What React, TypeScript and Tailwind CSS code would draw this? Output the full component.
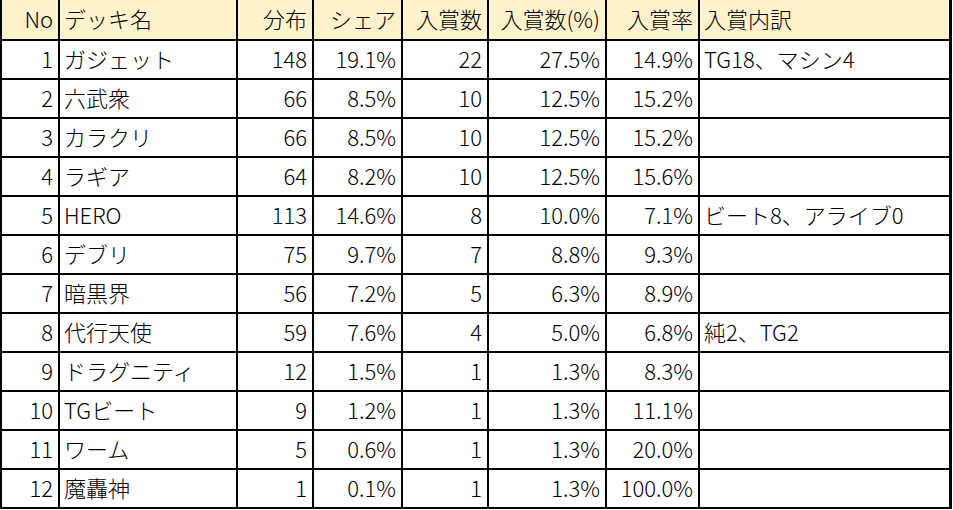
import React from "react";

type Row = [string, string, string, string, string, string, string, string];

const rows: Row[] = [
  ["1", "ガジェット", "148", "19.1%", "22", "27.5%", "14.9%", "TG18、マシン4"],
  ["2", "六武衆", "66", "8.5%", "10", "12.5%", "15.2%", ""],
  ["3", "カラクリ", "66", "8.5%", "10", "12.5%", "15.2%", ""],
  ["4", "ラギア", "64", "8.2%", "10", "12.5%", "15.6%", ""],
  ["5", "HERO", "113", "14.6%", "8", "10.0%", "7.1%", "ビート8、アライブ0"],
  ["6", "デブリ", "75", "9.7%", "7", "8.8%", "9.3%", ""],
  ["7", "暗黒界", "56", "7.2%", "5", "6.3%", "8.9%", ""],
  ["8", "代行天使", "59", "7.6%", "4", "5.0%", "6.8%", "純2、TG2"],
  ["9", "ドラグニティ", "12", "1.5%", "1", "1.3%", "8.3%", ""],
  ["10", "TGビート", "9", "1.2%", "1", "1.3%", "11.1%", ""],
  ["11", "ワーム", "5", "0.6%", "1", "1.3%", "20.0%", ""],
  ["12", "魔轟神", "1", "0.1%", "1", "1.3%", "100.0%", ""],
];

const header: Row = ["No", "デッキ名", "分布", "シェア", "入賞数", "入賞数(%)", "入賞率", "入賞内訳"];

const widths = [
  "w-[58px]",
  "w-[178px]",
  "w-[76px]",
  "w-[89px]",
  "w-[86px]",
  "w-[118px]",
  "w-[93px]",
  "w-[252px]",
];

const leftCols = new Set([1, 7]);

function Cell({ i, text }: { i: number; text: string }) {
  const align = leftCols.has(i) ? "justify-start pl-[4px]" : "justify-end pr-[5px]";
  const border = i === 7 ? "border-r-[3px]" : "border-r-2";
  return (
    <div
      className={`${widths[i]} shrink-0 ${border} border-black flex items-center pb-[3px] ${align} whitespace-nowrap`}
    >
      {text}
    </div>
  );
}

export default function App() {
  return (
    <div
      className="w-[953px] h-[510px] bg-white text-black text-[22px] font-light leading-none overflow-hidden"
      style={{ fontFamily: '"Noto Sans CJK JP", "Noto Sans", sans-serif' }}
    >
      <div className="flex flex-col border-l-2 border-black w-fit">
        <div className="flex h-[41px] bg-[#FFF2CC] border-b-2 border-black">
          {header.map((t, i) => (
            <Cell key={i} i={i} text={t} />
          ))}
        </div>
        {rows.map((r, ri) => (
          <div key={ri} className="flex h-[39px] bg-white border-b-2 border-black">
            {r.map((t, i) => (
              <Cell key={i} i={i} text={t} />
            ))}
          </div>
        ))}
      </div>
    </div>
  );
}
